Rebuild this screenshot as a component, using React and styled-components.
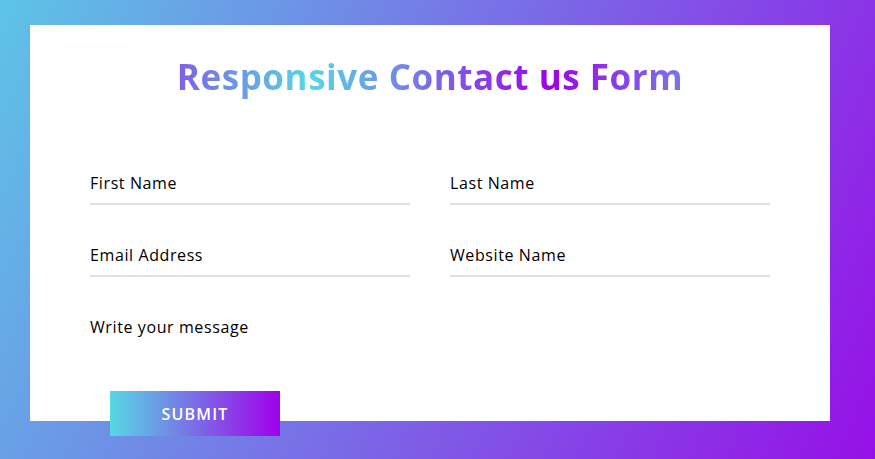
import React from "react"
import styled, { createGlobalStyle } from "styled-components"

const GlobalStyle = createGlobalStyle`
	* {
		box-sizing: border-box;
		margin: 0;
		padding: 0;
	}
	html,
	body {
		height: 100%;
		overflow: hidden;
	}
	body {
		font-family: "Open Sans", "Liberation Sans", sans-serif;
		background: linear-gradient(115deg, #5ec4e6 0%, #9610e6 100%);
	}
`

const Page = styled.div`
	padding: 25px 0 0 30px;
`

const Card = styled.div`
	width: 800px;
	height: 396px;
	background: #fff;
	padding: 25px 40px 10px 40px;
`

const Title = styled.h1`
	font-size: 35px;
	font-weight: 700;
	line-height: 53px;
	letter-spacing: 0.55px;
	text-align: center;
	background: linear-gradient(to left, #56d8e4, #9f01ea, #56d8e4, #9f01ea);
	-webkit-background-clip: text;
	background-clip: text;
	color: transparent;
`

const Form = styled.form`
	padding-top: 30px;
`

const Row = styled.div`
	display: flex;
	margin: 32px 0;
`

const Field = styled.div`
	position: relative;
	flex: 1;
	height: ${(props) => (props.tall ? "50px" : "40px")};
	margin: 0 20px;
`

const Input = styled.input`
	display: block;
	width: 100%;
	height: 100%;
	border: none;
	border-bottom: 2px solid rgba(0, 0, 0, 0.12);
	font-size: 17px;
	font-family: inherit;
	outline: none;
`

const Message = styled.textarea`
	display: block;
	width: 100%;
	height: 100%;
	border: none;
	resize: none;
	font-family: inherit;
	font-size: 17px;
	outline: none;
`

const Label = styled.label`
	position: absolute;
	left: 0;
	bottom: ${(props) => (props.top ? "auto" : "10px")};
	top: ${(props) => (props.top ? "6px" : "auto")};
	font-size: 16px;
	line-height: 24px;
	letter-spacing: 0.6px;
	color: #000;
	pointer-events: none;
`

const SubmitWrap = styled.div`
	width: 170px;
	height: 45px;
	margin: 0 40px;
	background: linear-gradient(to right, #56d8e4, #9f01ea);
`

const SubmitButton = styled.button`
	width: 100%;
	height: 100%;
	border: none;
	background: none;
	color: #fff;
	font-family: inherit;
	font-size: 16px;
	font-weight: 600;
	letter-spacing: 1.2px;
	text-transform: uppercase;
	cursor: pointer;
`

const fields = [
	["First Name", "Last Name"],
	["Email Address", "Website Name"],
]

export default function App() {
	return (
		<>
			<GlobalStyle />
			<Page>
				<Card>
					<Title>Responsive Contact us Form</Title>
					<Form onSubmit={(e) => e.preventDefault()}>
						{fields.map((pair) => (
							<Row key={pair[0]}>
								{pair.map((name) => (
									<Field key={name}>
										<Input type="text" id={name} />
										<Label htmlFor={name}>{name}</Label>
									</Field>
								))}
							</Row>
						))}
						<Row>
							<Field tall>
								<Message id="message" />
								<Label htmlFor="message" top>
									Write your message
								</Label>
							</Field>
						</Row>
						<Row>
							<SubmitWrap>
								<SubmitButton type="submit">submit</SubmitButton>
							</SubmitWrap>
						</Row>
					</Form>
				</Card>
			</Page>
		</>
	)
}
